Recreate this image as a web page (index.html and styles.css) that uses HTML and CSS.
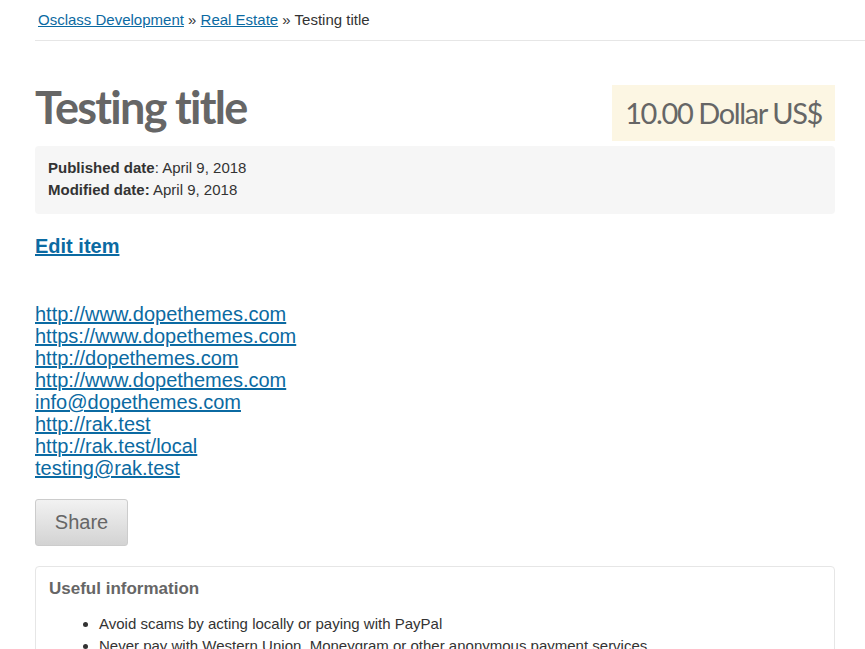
FILE: index.html
```html
<!DOCTYPE html>
<html>
<head>
<meta charset="utf-8">
<link rel="stylesheet" href="styles.css">
</head>
<body>
<div class="breadcrumb">
  <a href="#">Osclass Development</a> <span class="sep">»</span> <a href="#">Real Estate</a> <span class="sep">»</span> <span>Testing title</span>
</div>
<div class="content">
  <div class="item-header">
    <h1 class="title">Testing title</h1>
    <div class="price">10.00 Dollar US$</div>
  </div>
  <div class="meta">
    <div><b>Published date</b>: April 9, 2018</div>
    <div><b>Modified date:</b> April 9, 2018</div>
  </div>
  <a class="edit" href="#">Edit item</a>
  <div class="links">
    <a href="#">http://www.dopethemes.com</a><br>
    <a href="#">https://www.dopethemes.com</a><br>
    <a href="#">http://dopethemes.com</a><br>
    <a href="#">http://www.dopethemes.com</a><br>
    <a href="#">info@dopethemes.com</a><br>
    <a href="#">http://rak.test</a><br>
    <a href="#">http://rak.test/local</a><br>
    <a href="#">testing@rak.test</a>
  </div>
  <button class="share">Share</button>
  <div class="useful">
    <h3>Useful information</h3>
    <ul>
      <li>Avoid scams by acting locally or paying with PayPal</li>
      <li>Never pay with Western Union, Moneygram or other anonymous payment services</li>
      <li>Don't buy or sell outside of your country. Don't accept cashier cheques from outside your country</li>
    </ul>
  </div>
</div>
</body>
</html>
```
FILE: styles.css
```css
html, body {
  margin: 0;
  padding: 0;
  background: #fff;
  font-family: "Liberation Sans", Arial, sans-serif;
  color: #333;
}
a { color: #0b6aa2; }
.breadcrumb {
  margin-left: 35px;
  padding: 10px 0 0 3px;
  height: 30px;
  border-bottom: 1px solid #e6e6e6;
  font-size: 15px;
  line-height: 20px;
  color: #333;
}
.breadcrumb .sep { color: #333; }
.content {
  margin-left: 35px;
  width: 800px;
}
.item-header {
  display: flex;
  justify-content: space-between;
  align-items: flex-start;
  margin-top: 44px;
}
.title {
  margin: 0;
  font-family: Lato, sans-serif;
  font-weight: 700;
  font-size: 45px;
  letter-spacing: -1.7px;
  line-height: 44px;
  color: #666;
}
.price {
  background: #fcf6e3;
  font-family: Lato, sans-serif;
  font-size: 29px;
  letter-spacing: -1.4px;
  color: #666;
  padding: 0 13px;
  height: 56px;
  line-height: 56px;
}
.meta {
  margin-top: 5px;
  background: #f6f6f6;
  border-radius: 4px;
  padding: 11px 13px 13px;
  font-size: 15px;
  line-height: 22px;
  color: #333;
}
.edit {
  display: inline-block;
  margin-top: 20px;
  font-size: 20px;
  font-weight: 700;
  line-height: 24px;
}
.links {
  margin-top: 45px;
  font-size: 20px;
  line-height: 22px;
}
.share {
  display: block;
  margin-top: 20px;
  width: 93px;
  height: 47px;
  border: 1px solid #ccc;
  border-radius: 3px;
  background: linear-gradient(#f2f2f2, #d3d3d3);
  font-family: "Liberation Sans", Arial, sans-serif;
  font-size: 20px;
  color: #666;
  padding: 0;
}
.useful {
  margin-top: 20px;
  border: 1px solid #e6e6e6;
  border-radius: 4px;
  padding: 12px 13px;
}
.useful h3 {
  margin: 0;
  font-size: 17px;
  line-height: 20px;
  color: #666;
}
.useful ul {
  margin: 14px 0 0;
  padding-left: 50px;
  font-size: 15px;
  line-height: 22px;
  color: #333;
}
```
